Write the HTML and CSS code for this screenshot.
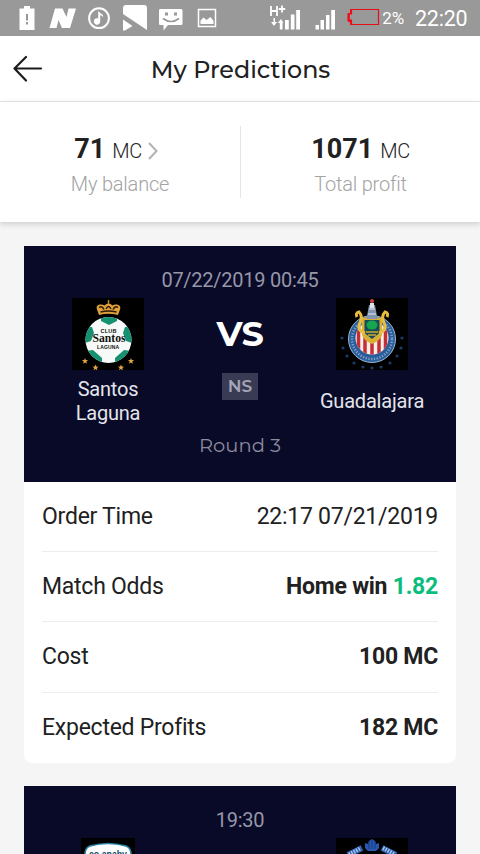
FILE: index.html
```html
<!DOCTYPE html>
<html lang="en">
<head>
<meta charset="utf-8">
<title>My Predictions</title>
<link rel="stylesheet" href="styles.css">
</head>
<body>
<div class="status">
  <svg class="status-icons" width="480" height="36" viewBox="0 0 480 36" fill="#fff">
    <path d="M19.500 8.500h4.500v-2.500h6v2.500h4.500v21.500h-15zM26 14v6.500h2v-6.500zM26 22v2.500h2v-2.500z" fill-rule="evenodd"/>
    <path d="M55 8.500h7.500l4 8.500 2-8.500h7.500l-6 19.500h-8l-3.500-8-2 8h-7z"/>
    <circle cx="99" cy="18.200" r="9.900" fill="none" stroke="#fff" stroke-width="2"/>
    <path d="M99 11.500c1 2.500 5 2 4 6-.7-2-2-2-2.800-2v6a3.200 3.200 0 1 1-2-3v-7z"/>
    <path d="M123 14V8q0-3 3-3h18q3 0 3 3v22zM123 19.500l9.500 6.500-7.500 4.500H123z"/>
    <path d="M160 9h21q1.500 0 1.500 1.500v13q0 1.500-1.500 1.500h-13l-4.500 5.500V25H160q-1 0-1-1.500v-13Q159 9 160 9z"/>
    <path d="M163 18.500q8 6 16 0" fill="none" stroke="#999" stroke-width="1.700"/>
    <path d="M165 12.500h3v3h-3zM174 12.500h3v3h-3z" fill="#999"/>
    <path d="M198.500 9.500h17v17h-17z" fill="none" stroke="#fff" stroke-width="1.500"/>
    <path d="M200.500 24v-3.500l3-3 3 2.500 4-3 3 4v3z"/>
    <path d="M271 6v10M277 6v10M271 11h6M282 5.500v7M278.800 9h6.400" fill="none" stroke="#fff" stroke-width="1.800"/>
    <path d="M273.500 18h1.500v4h2l-3 4-3-4h2.500zM281 19l-3.200 4h2v6.500h2.700V23h1z"/>
    <path d="M285 20h3.800v9.500H285zM290.800 14.500h3.700v15h-3.700zM296.200 10h3.800v19.500h-3.800zM315.500 25h3.500v4.500h-3.500zM320.500 20h3.500v9.500h-3.500zM326 15h3.500v14.500H326zM331.200 10h3.800v19.500h-3.800z"/>
    <path d="M351.500 9.500h27v15h-27v-3h-3v-8h3z" fill="none" stroke="#e60f18" stroke-width="1.200"/>
    <path d="M350 9v4.500h-2.500v7.500h2.500v4h2v-5.500h-2.200v-5h2.200V9z" fill="#f00b16"/>
  </svg>
  <span class="percent">2%</span><span class="clock">22:20</span>
</div>

<header class="header">
  <svg class="back" width="30" height="28" viewBox="0 0 30 28" fill="none" stroke="#1c1c1c" stroke-width="2.200" stroke-linecap="round" stroke-linejoin="round"><path d="M13 2 1.500 13.500 13 25.500M1.500 13.500h26.500"/></svg>
  <h1>My Predictions</h1>
</header>

<section class="stats">
  <div class="stat">
    <p class="amount"><b>71</b><span>MC</span><svg class="chevron" width="10" height="18" viewBox="0 0 10 18" fill="none" stroke="#b2b2b2" stroke-width="2"><path d="m1 1 7.500 8L1 17"/></svg></p>
    <p class="label">My balance</p>
  </div>
  <div class="stat">
    <p class="amount"><b>1071</b><span>MC</span></p>
    <p class="label">Total profit</p>
  </div>
</section>

<main class="list">
  <article class="card">
    <div class="match">
      <time>07/22/2019 00:45</time>
      <div class="teams">
        <div class="team">
          <svg class="crest" viewBox="0 0 72 72">
            <path d="M0 0h72v72H0z"/>
            <clipPath id="ball"><circle cx="36.500" cy="42" r="23"/></clipPath>
            <circle cx="36.500" cy="42" r="23" fill="#f7faf8"/>
            <g clip-path="url(#ball)" fill="#159070">
              <path d="M29 17h16v6l-8 4-8-4zM13 29l7 0 2 6-3 8-6 2zM60 29l-7 0-2 6 3 8 6 2zM13 53l8-1 9 8v6H15zM60 53l-8-1-9 8v6h15z"/>
            </g>
            <path d="M27 17q9-2.500 19 0l2-5.500q1.500-4-3-5-3-.5-4.500 1-2-2-4-2t-4 2q-2-1.500-5-1-4 1-2.500 5z" fill="#dfa13a"/>
            <path d="M36.500 2v4" stroke="#c78727" stroke-width="1.500"/>
            <path d="M27 9.500q3-2 5 2M34 11q2.500-5 5 0M41 11.500q2-4 5-2M28.500 14q8-2 16 0" stroke="#2d1905" stroke-width="1.500" fill="none"/>
            <g text-anchor="middle" fill="#111">
              <text class="crest-sans" x="36.500" y="34.500" font-size="5.500" textLength="16">CLUB</text>
              <text class="crest-serif" x="37" y="44" font-size="11.500" textLength="33" lengthAdjust="spacingAndGlyphs">Santos</text>
              <text class="crest-sans" x="36" y="51" font-size="5" textLength="22">LAGUNA</text>
            </g>
            <g fill="#e3a840"><path id="star" d="m13 60 .8 2.100 2.300.1-1.800 1.400.7 2.200-2-1.300-2 1.300.7-2.200-1.800-1.400 2.300-.1z"/><use href="#star" x="10.500" y="6.500"/><use href="#star" x="36" y="6.500"/><use href="#star" x="46"/></g>
          </svg>
          <div class="name">Santos<br>Laguna</div>
        </div>
        <div class="middle"><span class="vs">VS</span><span class="badge">NS</span></div>
        <div class="team">
          <svg class="crest" viewBox="0 0 72 72">
            <path d="M0 0h72v72H0z"/>
            <circle cx="36" cy="41" r="23.500" fill="#285d9c" stroke="#9fb6d1" stroke-width="1"/>
            <circle cx="36" cy="41" r="20" fill="none" stroke="#7fa0c5" stroke-width="2.500" stroke-dasharray="1.300 1.500"/>
            <clipPath id="shield"><circle cx="36" cy="40" r="16.500"/></clipPath>
            <g clip-path="url(#shield)"><path d="M18 22h36v36H18z" fill="#f6eee9"/><path d="M22.500 25v32M29 25v32M36 25v32M43 25v32M49.500 25v32" stroke="#c52e34" stroke-width="3.500"/></g>
            <path d="M26 20q10-3 20 0v17q-2 6-10 9-8-3-10-9z" fill="#d9af35"/>
            <path d="M28.500 22h15v13l-7.500 6-7.500-6z" fill="#164e58"/>
            <ellipse cx="36" cy="27" rx="5.500" ry="4.500" fill="#17a650"/>
            <path d="M30 34h12M32 37h8" stroke="#cda932" stroke-width="1.500"/>
            <path d="M29 35q-9-3-5-10 3-7-1-11-4 1-2 5M43 35q9-3 5-10-3-7 1-11 4 1 2 5" stroke="#e9bd3e" stroke-width="3" fill="none"/>
            <path d="M33 7h6l2.500 14h-11z" fill="#8296b4"/><path d="M34 5h4v5h-4z" fill="#dde2e9"/><path d="M33 11h6M32 16h8" stroke="#e8ecf0"/>
            <circle cx="36" cy="3" r="2" fill="#ca444b"/>
            <g fill="#183b69"><circle cx="6" cy="40" r="1.600"/><circle cx="7" cy="50" r="1.600"/><circle cx="11" cy="58" r="1.600"/><circle cx="18" cy="65" r="1.600"/><circle cx="27" cy="69" r="1.600"/><circle cx="36" cy="70" r="1.600"/><circle cx="45" cy="69" r="1.600"/><circle cx="54" cy="65" r="1.600"/><circle cx="61" cy="58" r="1.600"/><circle cx="65" cy="50" r="1.600"/><circle cx="66" cy="40" r="1.600"/></g>
          </svg>
          <div class="name">Guadalajara</div>
        </div>
      </div>
      <div class="round">Round 3</div>
    </div>
    <dl class="details">
      <div class="row"><dt>Order Time</dt><dd class="plain">22:17 07/21/2019</dd></div>
      <div class="row"><dt>Match Odds</dt><dd>Home win <em>1.82</em></dd></div>
      <div class="row"><dt>Cost</dt><dd>100 MC</dd></div>
      <div class="row"><dt>Expected Profits</dt><dd>182 MC</dd></div>
    </dl>
  </article>
  <article class="card">
    <div class="match upcoming">
      <time>19:30</time>
      <div class="teams">
        <div class="team"><svg class="crest narrow" viewBox="0 0 54 72"><path d="M0 0h54v72H0z"/><path d="M4 20q-1-10 5-12 18-5 36 0 6 2 5 12v12q0 22-23 34Q4 54 4 32z" fill="#fff" stroke="#277fa2" stroke-width="1.500"/><text class="crest-sans" x="27" y="19.500" font-size="10" text-anchor="middle" textLength="38" lengthAdjust="spacingAndGlyphs" fill="#164b68">co apaby</text></svg></div>
        <div class="middle"></div>
        <div class="team"><svg class="crest" viewBox="0 0 72 72"><path d="M0 0h72v72H0z"/><path d="M29 5l3 1 1-3 3-2 3 2 1 3 3-1v5l-3 3h-8l-3-3z" fill="#2858b0"/><path d="M33 3v8M36 2v9M39 3v8" stroke="#15377b"/><path d="m12 17 14-7M46 10l14 7" stroke="#2c5dab" stroke-width="6"/><path d="m13 16.500 12-6.500M47 10l12 6.500" stroke="#a9c4ed" stroke-width="4" stroke-dasharray="1.500 1.200"/></svg></div>
      </div>
    </div>
  </article>
</main>
</body>
</html>
```
FILE: styles.css
```css
* { box-sizing: border-box; }
body { margin: 0; height: 854px; overflow: hidden; background: #f5f5f5; color: #212121; font-family: Roboto, sans-serif; }
h1, p, dl, dd { margin: 0; }
svg { display: block; }
.status { position: relative; height: 36px; background: #999; color: #fff; display: flex; justify-content: flex-end; align-items: center; padding-right: 12.5px; }
.status-icons { position: absolute; left: 0; top: 0; }
.percent { font-size: 17px; margin-right: 11px; letter-spacing: -.2px; }
.clock { font-size: 21.500px; line-height: 36px; padding-top: 1px; letter-spacing: -.2px; }
.header { height: 66px; background: #fff; border-bottom: 1px solid #e8e8e8; display: grid; grid-template-columns: 30px 1fr 30px; align-items: center; padding: 0 13px; }
.header h1 { font: 500 23.800px/30px Montserrat, Inter, sans-serif; text-align: center; padding: 2px 0 0 1px; white-space: nowrap; }
.stats { height: 120px; background: #fff; display: grid; grid-template-columns: 1fr 1fr; align-items: center; box-shadow: 0 2px 6px rgba(0,0,0,.17); }
.stat { height: 72px; text-align: center; }
.stat + .stat { border-left: 1px solid #e5e5e5; }
.amount { height: 44px; display: flex; justify-content: center; align-items: baseline; padding-top: 7px; line-height: 32px; }
.amount b { font-size: 27px; font-weight: 700; margin-right: 7px; }
.amount span { font-size: 20px; font-weight: 300; letter-spacing: -.5px; }
.stat:first-child .amount { padding-right: 8px; }
.amount .chevron { margin-left: 6px; align-self: flex-start; margin-top: 9px; }
.label { font-size: 20px; line-height: 28px; font-weight: 300; letter-spacing: -.2px; color: #a3a3a3; }
.list { padding: 24px; display: grid; gap: 23px; }
.match { height: 235.5px; background: #080a28; padding: 22px 18px 0; color: #e4e4eb; text-align: center; }
.match time { display: block; font-size: 20px; line-height: 24px; letter-spacing: -.25px; color: #9797a8; }
.upcoming { height: 68px; overflow: hidden; }
.teams { display: grid; grid-template-columns: repeat(3, 132px); margin-top: 6px; }
.crest { width: 72px; height: 72px; margin: 0 auto; }
.narrow { width: 54px; }
.crest-sans { font-family: "Liberation Sans", sans-serif; font-weight: 700; }
.crest-serif { font-family: "Liberation Serif", serif; font-weight: 700; }
.name { height: 48px; display: flex; align-items: center; justify-content: center; margin-top: 7px; font-size: 20px; line-height: 24px; letter-spacing: -.2px; }
.middle { display: flex; flex-direction: column; align-items: center; padding-top: 16px; }
.vs { font: 700 35px/40px Montserrat, Inter, sans-serif; letter-spacing: -.5px; color: #fff; }
.badge { margin-top: 19px; width: 36px; height: 27px; background: #393a54; color: #a4a4b5; font: 600 17px/27px Montserrat, Inter, sans-serif; }
.round { margin-top: 8px; font: 400 19.500px/24px Montserrat, Inter, sans-serif; color: #8b8b9d; }
.details { background: #fff; padding: 0 18px; border-radius: 0 0 8px 8px; }
.row { height: 70.4px; display: flex; justify-content: space-between; align-items: center; border-bottom: 1px solid #ededed; font-size: 23px; letter-spacing: -.25px; }
.row:last-child { border-bottom: 0; }
dd { font-weight: 700; }
dd.plain { font-weight: 400; }
em { color: #0bbd7d; font-style: normal; }
```
